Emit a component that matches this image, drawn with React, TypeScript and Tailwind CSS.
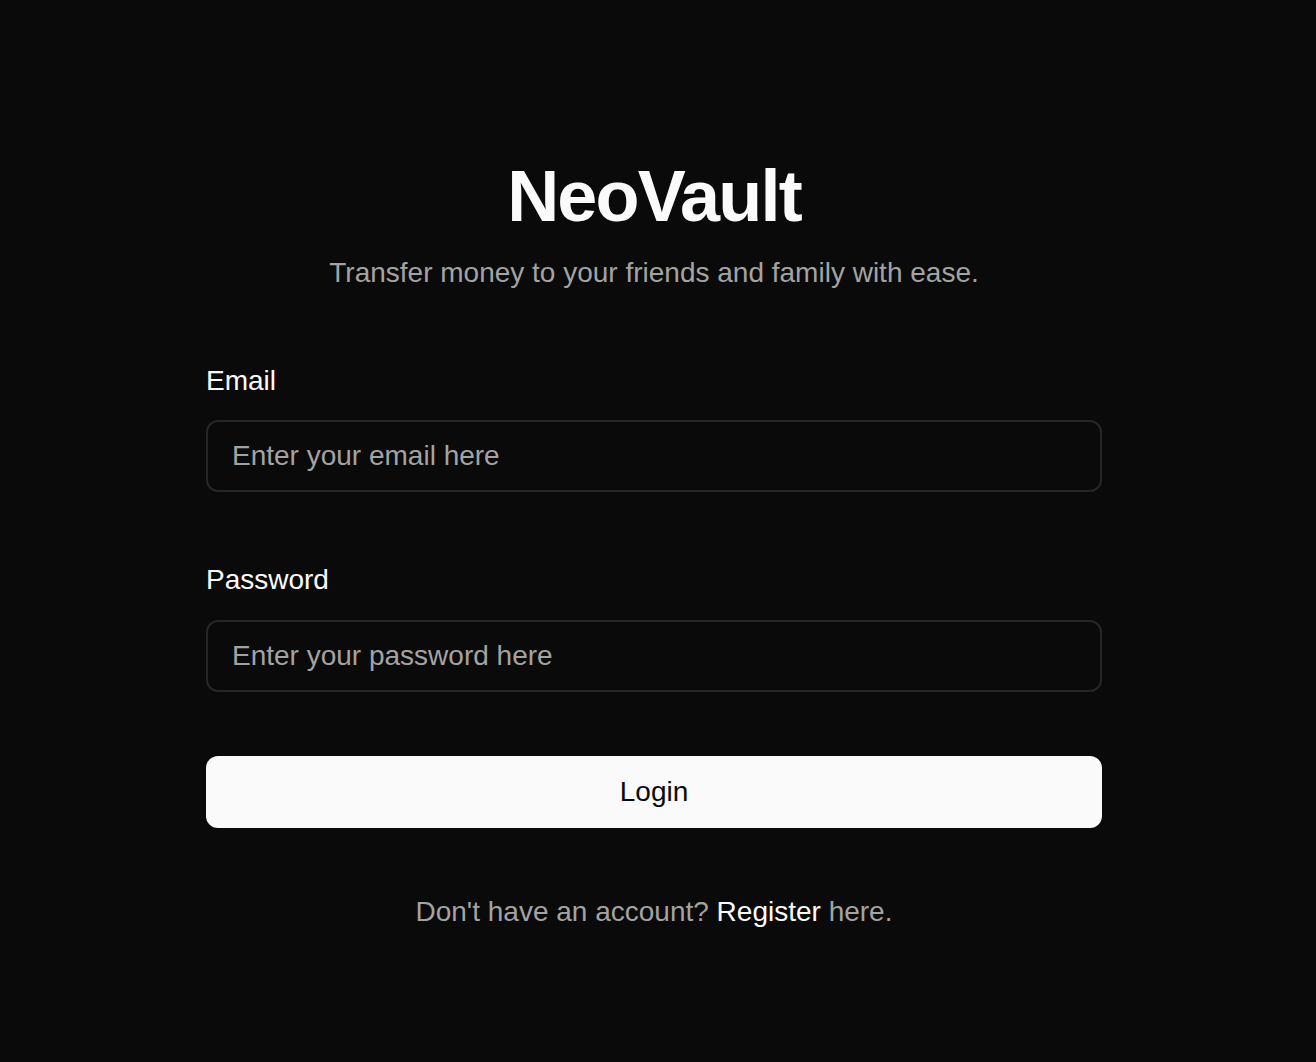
export default function App() {
  return (
    <div
      className="h-screen w-full overflow-hidden bg-[#0a0a0a] flex flex-col items-center pt-[160px] pr-2"
      style={{ fontFamily: '"Liberation Sans", Arial, sans-serif' }}
    >
      <h1 className="text-[72px] leading-[72px] font-bold tracking-tight text-[#fafafa]">
        NeoVault
      </h1>
      <p className="mt-[23px] text-[28px] leading-[36px] text-[#a3a3a3]">
        Transfer money to your friends and family with ease.
      </p>

      <form className="w-[896px] mt-[72px] flex flex-col" onSubmit={(e) => e.preventDefault()}>
        <label htmlFor="email" className="text-[28px] leading-[36px] text-[#fafafa]">
          Email
        </label>
        <input
          id="email"
          type="email"
          placeholder="Enter your email here"
          className="mt-[21px] h-[72px] w-full rounded-xl border-2 border-[#262626] bg-[#0a0a0a] px-6 text-[28px] text-[#fafafa] placeholder:text-[#a3a3a3] outline-none"
        />

        <label htmlFor="password" className="mt-[70px] text-[28px] leading-[36px] text-[#fafafa]">
          Password
        </label>
        <input
          id="password"
          type="password"
          placeholder="Enter your password here"
          className="mt-[22px] h-[72px] w-full rounded-xl border-2 border-[#262626] bg-[#0a0a0a] px-6 text-[28px] text-[#fafafa] placeholder:text-[#a3a3a3] outline-none"
        />

        <button
          type="submit"
          className="mt-[64px] h-[72px] w-full rounded-xl bg-[#fafafa] text-[28px] text-[#0a0a0a]"
        >
          Login
        </button>
      </form>

      <p className="mt-[66px] text-[28px] leading-[36px] text-[#a3a3a3]">
        Don't have an account? <a className="text-[#fafafa] cursor-pointer">Register</a> here.
      </p>
    </div>
  );
}
